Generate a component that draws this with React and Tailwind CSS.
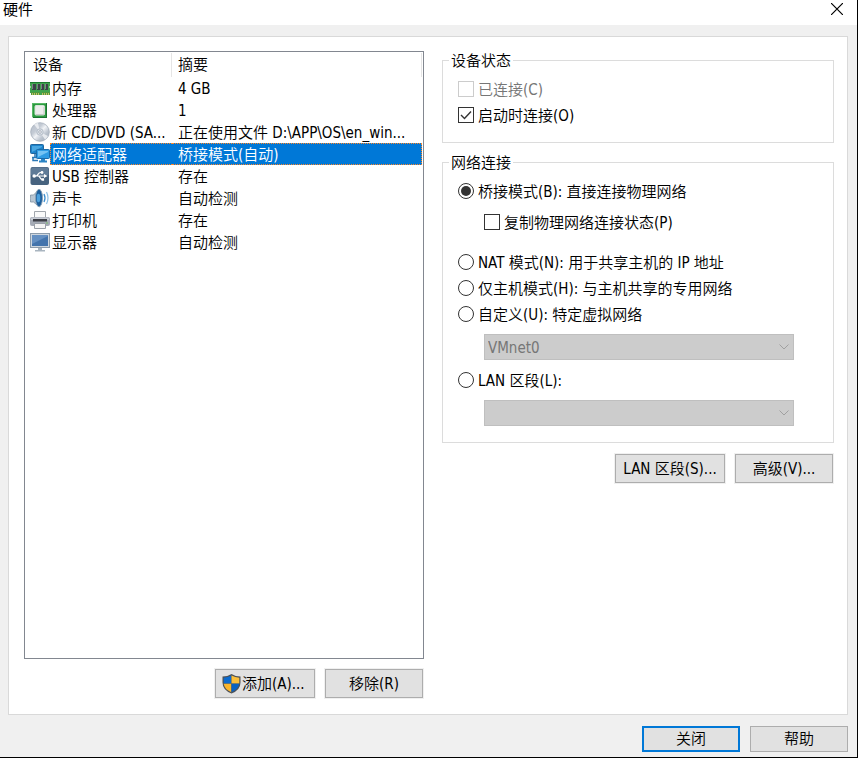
import { useState } from "react";
import clsx from "clsx";

function MemoryIcon() {
  return (
    <svg width="20" height="20" viewBox="0 0 20 20" aria-hidden="true">
      <path d="M0 4h20v4l-1 1 1 1v7H1v-2H0v-5l1-1-1-1z" fill="#3fa34d" />
      <path d="M0 4h20v1H0z" fill="#1c7a2f" />
      <path d="M2 6h4v6H2zM7 6h3v6H7zM11 6h3v6h-3zM15 6h3v6h-3z" fill="#3c4447" />
      <path d="M2 6h1v5H2zM7 6h1v5H7zM11 6h1v5h-1zM15 6h1v5h-1z" fill="#7b8386" />
      <path d="M1 14h9v3H1zM12 14h8v3h-8z" fill="#4f9a3f" />
      <path d="M2.500 15v2M4.500 15v2M6.500 15v2M8.500 15v2M12.500 15v2M14.500 15v2M16.500 15v2M18.500 15v2" stroke="#c5bf63" />
    </svg>
  );
}

function CpuIcon() {
  return (
    <svg width="20" height="20" viewBox="0 0 20 20" aria-hidden="true">
      <path d="M2 3h15v15H3l-1-2z" fill="#2c9a40" />
      <path d="M2 3h15v1H2zM2 3h1v13H2z" fill="#57b866" />
      <path d="M16 3h1v15H3v-1h13z" fill="#1a7230" />
      <rect x="5" y="5.500" width="9.500" height="9.500" rx="1" fill="#ececec" stroke="#d5e6d7" />
      <path d="M6 14.500h8V7" fill="none" stroke="#c8c8c8" />
    </svg>
  );
}

function DiscIcon() {
  return (
    <svg width="20" height="20" viewBox="0 0 20 20" aria-hidden="true">
      <defs>
        <linearGradient id="disc" x1="0" y1="0" x2="1" y2="1">
          <stop offset="0" stopColor="#b4bcc8" />
          <stop offset="0.350" stopColor="#c4cbd5" />
          <stop offset="0.500" stopColor="#f2f4f7" />
          <stop offset="0.700" stopColor="#bcc4cf" />
          <stop offset="1" stopColor="#9ca7b5" />
        </linearGradient>
      </defs>
      <circle cx="10" cy="10" r="9.300" fill="url(#disc)" stroke="#a3adba" strokeWidth="0.800" />
      <path d="M10 10 4 2.500A9 9 0 0 1 8 1zM10 10l8 4a9 9 0 0 1-3 3.500z" fill="#eef1f5" opacity="0.850" />
      <circle cx="10" cy="10" r="3.200" fill="#dfe4ea" stroke="#a8b2bf" strokeWidth="0.800" />
      <circle cx="10" cy="10" r="1.300" fill="#fff" stroke="#8c97a6" strokeWidth="0.700" />
    </svg>
  );
}

function NetworkIcon() {
  return (
    <svg width="20" height="20" viewBox="0 0 20 20" aria-hidden="true">
      <rect x="0.500" y="0.500" width="13" height="9" rx="1" fill="#1b83cb" stroke="#22659c" />
      <path d="M2 2h10v1L2 8z" fill="#4aa6e0" />
      <path d="M5 10v3M2 13.500h5M3 14v2.500h5" fill="none" stroke="#2a77b5" strokeWidth="1.500" />
      <rect x="6.500" y="5.500" width="13" height="9" rx="1" fill="#2f9ce4" stroke="#1b6cab" />
      <path d="M8 7h10v1L8 13z" fill="#75c3f3" />
      <path d="M11 15h4v1.500h2V18.500H9v-2h2z" fill="#2a83c4" />
    </svg>
  );
}

function UsbIcon() {
  return (
    <svg width="20" height="20" viewBox="0 0 20 20" aria-hidden="true">
      <rect x="0.500" y="1" width="18.500" height="18" rx="2" fill="#47637f" />
      <path d="M1 4q0-2.500 2-2.500h13.500q2 0 2 2.500v5H1z" fill="#5f7b97" />
      <g stroke="#fff" strokeWidth="1.200" fill="none">
        <path d="M3.500 10h11M6 10c2 0 2-3.500 4.500-3.500h1M8 10c2 0 2 3.500 4.500 3.500" />
      </g>
      <circle cx="4.200" cy="10" r="1.800" fill="#fff" />
      <circle cx="12" cy="6.500" r="1.400" fill="#fff" />
      <path d="M14 8l3.500 2L14 12zM11.500 12.200h2.600v2.600h-2.600z" fill="#fff" />
    </svg>
  );
}

function SoundIcon() {
  return (
    <svg width="20" height="20" viewBox="0 0 20 20" aria-hidden="true">
      <path d="M0.500 7h3l6-6q3 4 2.500 9T9.500 19l-6-5h-3q-0.600-3.500 0-7z" fill="#b9c6d2" stroke="#7d90a0" strokeWidth="0.800" />
      <ellipse cx="9" cy="10" rx="3.500" ry="8.700" fill="#1d5f9c" stroke="#8fa5b8" strokeWidth="0.900" />
      <ellipse cx="8.500" cy="10" rx="1.800" ry="4.200" fill="#4aa0dd" />
      <path d="M14 6q2 4 0 8" fill="none" stroke="#3f8fce" strokeWidth="1.300" />
      <path d="M16.500 4q3 6 0 12" fill="none" stroke="#8fc1e6" strokeWidth="1.200" />
    </svg>
  );
}

function PrinterIcon() {
  return (
    <svg width="20" height="20" viewBox="0 0 20 20" aria-hidden="true">
      <path d="M4.500 1.500h11V8h-11z" fill="#fafafa" stroke="#a2a7ad" />
      <rect x="0" y="7" width="20" height="9" rx="2" fill="#a5abb6" />
      <path d="M1 9q0-1.500 1.500-1.500h15Q19 7.500 19 9v1H1z" fill="#c9cdd5" />
      <path d="M3 9h14v2.500H3z" fill="#3c3e46" />
      <path d="M4.500 13.500h11v5h-11z" fill="#f5f5f5" stroke="#9aa0a8" />
      <path d="M16 13h2" stroke="#76c069" />
    </svg>
  );
}

function DisplayIcon() {
  return (
    <svg width="20" height="20" viewBox="0 0 20 20" aria-hidden="true">
      <rect x="0.500" y="1.500" width="19" height="14" fill="#cfd7df" stroke="#8d9cab" />
      <path d="M2 3h16v11H2z" fill="#4474ac" />
      <path d="M2 3h16v1L2 12z" fill="#6590c2" />
      <path d="M8 16h4v2h3v1.500H5V18h3z" fill="#a9b5c0" />
    </svg>
  );
}

function ShieldIcon() {
  return (
    <svg width="20" height="20" viewBox="0 0 20 20" aria-hidden="true">
      <path d="M9.500 0Q5.500 2.500 0.500 2.500v6q0 7.500 9 11Q18.500 16 18.500 8.500v-6Q13.500 2.500 9.500 0z" fill="#4e5257" />
      <path d="M9.200 1.500Q6 3.500 1.700 3.700V9.500h7.500z" fill="#0b6bd0" />
      <path d="M9.500 1.500q3.500 2 7.800 2.200v5.800H9.500z" fill="#fbbf3a" />
      <path d="M1.700 9.800h7.600v8.400Q2.500 15.500 1.700 9.800z" fill="#fbb62c" />
      <path d="M9.500 9.800h7.800Q16.500 15.500 9.500 18.200z" fill="#0b62c0" />
    </svg>
  );
}

const devices = [
  { name: "内存", summary: "4 GB", Icon: MemoryIcon },
  { name: "处理器", summary: "1", Icon: CpuIcon },
  { name: "新 CD/DVD (SA...", summary: "正在使用文件 D:\\APP\\OS\\en_win...", Icon: DiscIcon },
  { name: "网络适配器", summary: "桥接模式(自动)", Icon: NetworkIcon },
  { name: "USB 控制器", summary: "存在", Icon: UsbIcon },
  { name: "声卡", summary: "自动检测", Icon: SoundIcon },
  { name: "打印机", summary: "存在", Icon: PrinterIcon },
  { name: "显示器", summary: "自动检测", Icon: DisplayIcon },
];

function DeviceTable() {
  const [selected, setSelected] = useState(3);
  return (
    <div className="flex-1 border border-[#828790] bg-white pr-px">
      <table className="w-full table-fixed border-collapse text-left">
        <thead>
          <tr className="h-[25px]">
            <th scope="col" className="w-[147px] p-0 pt-px font-[350]">
              <div className="border-r border-[#e5e5e5] pl-2 leading-6">设备</div>
            </th>
            <th scope="col" className="p-0 pt-px font-[350]">
              <div className="border-r border-[#e5e5e5] pl-[6px] leading-6">摘要</div>
            </th>
          </tr>
        </thead>
        <tbody>
          {devices.map(({ name, summary, Icon }, i) => {
            const active = i === selected;
            return (
              <tr key={name} className="h-[22px] whitespace-nowrap" aria-selected={active} onClick={() => setSelected(i)}>
                <td className="p-0">
                  <div className="flex h-[22px] items-center pl-[5px]">
                    <Icon />
                    <span
                      className={clsx(
                        "h-[22px] flex-1 border-y border-l border-dotted pl-px leading-[22px]",
                        active ? "border-[#ff8728] bg-[#0078d7] text-white" : "border-transparent"
                      )}
                    >
                      {name}
                    </span>
                  </div>
                </td>
                <td className="p-0">
                  <div
                    className={clsx(
                      "h-[22px] overflow-hidden border-y border-r border-dotted pl-[6px] leading-[22px]",
                      active ? "border-[#ff8728] bg-[#0078d7] text-white" : "border-transparent"
                    )}
                  >
                    {summary}
                  </div>
                </td>
              </tr>
            );
          })}
        </tbody>
      </table>
    </div>
  );
}

function Check({ label, ...props }) {
  return (
    <label className="flex h-[26px] items-center gap-1 has-disabled:text-[#767676]">
      <span className="grid size-4">
        <input
          type="checkbox"
          className="peer col-start-1 row-start-1 size-4 appearance-none border border-[#333] bg-white disabled:border-[#ccc]"
          {...props}
        />
        <svg className="pointer-events-none invisible col-start-1 row-start-1 peer-checked:visible" width="16" height="16" viewBox="0 0 16 16" aria-hidden="true">
          <path d="M3 8l3.500 3.500L13 4.500" fill="none" stroke="#333" strokeWidth="1.400" />
        </svg>
      </span>
      <span className="pt-0.5">{label}</span>
    </label>
  );
}

function Radio({ label, ...props }) {
  return (
    <label className="flex h-[26px] items-center gap-1">
      <span className="grid size-4 place-items-center">
        <input
          type="radio"
          name="network"
          className="peer col-start-1 row-start-1 size-4 appearance-none rounded-full border border-[#333] bg-white"
          {...props}
        />
        <span className="pointer-events-none invisible col-start-1 row-start-1 size-[10px] rounded-full bg-[#333] peer-checked:visible" />
      </span>
      <span className="pt-0.5">{label}</span>
    </label>
  );
}

function DisabledSelect({ label, value }) {
  return (
    <div className="mr-6 ml-[26px] grid items-center">
      <select
        disabled
        aria-label={label}
        className="col-start-1 row-start-1 h-[26px] w-full appearance-none border border-[#bfbfbf] bg-[#ccc] pt-0.5 pl-[3px] text-[#767676] opacity-100"
      >
        <option>{value}</option>
      </select>
      <svg className="pointer-events-none col-start-1 row-start-1 mr-[5px] justify-self-end" width="10" height="6" viewBox="0 0 10 6" aria-hidden="true">
        <path d="M0.500 0.500 5 5l4.500-4.500" fill="none" stroke="#a0a0a0" />
      </svg>
    </div>
  );
}

function Group({ title, className, children }) {
  return (
    <fieldset className={clsx("min-w-0 border border-[#dcdcdc] px-[15px]", className)}>
      <legend className="-ml-[9px] h-5 px-0.5 leading-[22px]">{title}</legend>
      {children}
    </fieldset>
  );
}

function Button({ className, children, ...props }) {
  return (
    <button
      type="button"
      className={clsx("flex items-center bg-[#e1e1e1] whitespace-nowrap", className)}
      {...props}
    >
      {children}
    </button>
  );
}

const panelButton = "h-[29px] border border-[#adadad] shadow-[0_0_0_1px_#f0f0f0]";

export default function App() {
  const [mode, setMode] = useState("bridged");
  const pick = (value) => ({ value, checked: mode === value, onChange: () => setMode(value) });

  return (
    <div className="flex min-h-screen flex-col border-r border-b border-black bg-[#f0f0f0] font-['DejaVu_Sans_Condensed','Noto_Sans_CJK_SC',sans-serif] text-[15px] leading-5 font-[350] text-black">
      <header className="flex h-[25px] items-start justify-between bg-white pr-[14px] pl-[3px]">
        <h1 className="font-normal">硬件</h1>
        <button type="button" aria-label="关闭窗口" className="pt-[3px]">
          <svg width="12" height="12" viewBox="0 0 12 12" aria-hidden="true">
            <path d="M0 0l12 12M12 0 0 12" stroke="#000" strokeWidth="1.200" />
          </svg>
        </button>
      </header>

      <main className="mt-[11px] mr-[9px] ml-2 grid flex-1 grid-cols-[400fr_392fr] gap-[18px] border border-[#d9d9d9] bg-white pt-[14px] pr-[13px] pb-4 pl-[15px]">
        <section className="flex flex-col gap-[10px]">
          <DeviceTable />
          <div className="flex justify-end gap-[10px] pr-px">
            <Button className={clsx(panelButton, "w-[100px] pl-[6px]")}>
              <ShieldIcon />
              添加(A)...
            </Button>
            <Button className={clsx(panelButton, "w-[98px] justify-center")}>移除(R)</Button>
          </div>
        </section>

        <section className="-mt-px flex flex-col">
          <Group title="设备状态" className="pt-[6px] pb-[14px]">
            <Check label="已连接(C)" disabled />
            <Check label="启动时连接(O)" defaultChecked />
          </Group>

          <Group title="网络连接" className="mt-[9px] pt-[6px] pb-4">
            <Radio label="桥接模式(B): 直接连接物理网络" {...pick("bridged")} />
            <div className="mt-[5px] mb-[14px] pl-[26px]">
              <Check label="复制物理网络连接状态(P)" />
            </div>
            <Radio label="NAT 模式(N): 用于共享主机的 IP 地址" {...pick("nat")} />
            <Radio label="仅主机模式(H): 与主机共享的专用网络" {...pick("host")} />
            <Radio label="自定义(U): 特定虚拟网络" {...pick("custom")} />
            <div className="mt-[7px] mb-[7px]">
              <DisabledSelect label="虚拟网络" value="VMnet0" />
            </div>
            <Radio label="LAN 区段(L):" {...pick("lan")} />
            <div className="mt-[7px]">
              <DisabledSelect label="LAN 区段" value="" />
            </div>
          </Group>

          <div className="mt-[11px] flex justify-end gap-[10px] pr-px">
            <Button className={clsx(panelButton, "w-[110px] justify-center")}>LAN 区段(S)...</Button>
            <Button className={clsx(panelButton, "w-[98px] justify-center")}>高级(V)...</Button>
          </div>
        </section>
      </main>

      <footer className="flex justify-end gap-[10px] pt-[11px] pr-[9px] pb-[5px]">
        <Button className="h-[26px] w-[98px] justify-center border-2 border-[#0078d7]">关闭</Button>
        <Button className="h-[26px] w-[98px] justify-center border border-[#adadad]">帮助</Button>
      </footer>
    </div>
  );
}
